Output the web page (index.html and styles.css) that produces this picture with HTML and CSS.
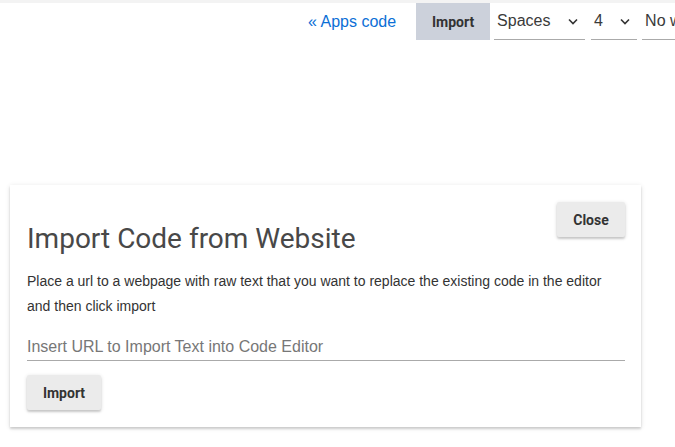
FILE: index.html
```html
<!DOCTYPE html>
<html>
    <head>
        <title> Import Code </title>
        <link rel="stylesheet" href="styles.css">
    </head>
    <body>
        <div class = "topline"></div>
        <div class = "toolbar">
            <a class = "apps-link" href = "#">&laquo; Apps code</a>
            <button class = "tool-btn">Import</button>
            <div class = "pick pick-indent">
                <span>Spaces</span>
                <svg width="10" height="7" viewBox="0 0 10 7"><path d="M1 1.5 L5 5.5 L9 1.5" fill="none" stroke="#333" stroke-width="1.6"/></svg>
            </div>
            <div class = "pick pick-size">
                <span>4</span>
                <svg width="10" height="7" viewBox="0 0 10 7"><path d="M1 1.5 L5 5.5 L9 1.5" fill="none" stroke="#333" stroke-width="1.6"/></svg>
            </div>
            <div class = "pick pick-wrap">
                <span>No wrap</span>
            </div>
        </div>

        <div class = "card">
            <div class = "card-head">
                <h2>Import Code from Website</h2>
                <button class = "raised close-btn">Close</button>
            </div>
            <p class = "hint">
                Place a url to a webpage with raw text that you want to replace the existing code in the editor and then click import
            </p>
            <input class = "url" type = "text" placeholder = "Insert URL to Import Text into Code Editor">
            <button class = "raised import-btn">Import</button>
        </div>
    </body>
</html>
```

FILE: styles.css
```css
body {
    margin: 0;
    padding: 0;
    height: 100vh;
    overflow: hidden;
    background: #fff;
    font-family: "Liberation Sans", Arial, sans-serif;
    color: #333;
}
.topline {
    height: 3px;
    background: #f3f3f3;
}
.toolbar {
    display: flex;
    align-items: center;
    height: 37px;
    padding-left: 308px;
    white-space: nowrap;
}
.apps-link {
    color: #0b6fd6;
    text-decoration: none;
    font-size: 16px;
    margin-right: 20px;
}
.tool-btn {
    flex-shrink: 0;
    width: 74px;
    height: 37px;
    border: none;
    background: #ccd1db;
    color: #333;
    font-family: Roboto, sans-serif;
    font-weight: bold;
    font-size: 14px;
    padding: 0;
}
.pick {
    flex-shrink: 0;
    display: flex;
    align-items: center;
    justify-content: space-between;
    height: 36px;
    border-bottom: 1px solid #aaa;
    font-size: 16px;
    color: #3a3a3a;
    padding-left: 3px;
    padding-right: 7px;
    box-sizing: border-box;
    overflow: hidden;
}
.pick-indent { width: 91px; margin-left: 4px; }
.pick-size { width: 46px; margin-left: 6px; }
.pick-wrap { width: 60px; margin-left: 5px; }

.card {
    margin: 145px 0 0 10px;
    width: 631px;
    height: 242px;
    box-sizing: border-box;
    padding: 16px 16px 0 17px;
    background: #fff;
    box-shadow: 0 2px 2px rgba(0,0,0,0.14), 0 1px 5px rgba(0,0,0,0.12);
}
.card-head {
    display: flex;
    justify-content: space-between;
    align-items: flex-start;
}
.card-head h2 {
    margin: 22px 0 0 0;
    font-family: Roboto, sans-serif;
    font-weight: normal;
    font-size: 28px;
    color: #484848;
    line-height: 32px;
}
.raised {
    border: none;
    border-radius: 2px;
    background: #ebebeb;
    color: #333;
    font-family: Roboto, sans-serif;
    font-weight: bold;
    font-size: 14px;
    height: 35px;
    box-shadow: 0 2px 2px rgba(0,0,0,0.14), 0 1px 4px rgba(0,0,0,0.14);
}
.close-btn {
    width: 68px;
    margin-top: 1px;
}
.hint {
    margin: 14px 0 0 0;
    font-size: 14px;
    line-height: 25px;
    color: #333;
    padding-right: 8px;
}
.url {
    display: block;
    width: 598px;
    margin-top: 9px;
    border: none;
    border-bottom: 1px solid #aaa;
    padding: 10px 0 4px 0;
    font-family: "Liberation Sans", Arial, sans-serif;
    font-size: 16px;
    outline: none;
}
.url::placeholder { color: #777; }
.import-btn {
    margin-top: 14px;
    width: 74px;
}
```
